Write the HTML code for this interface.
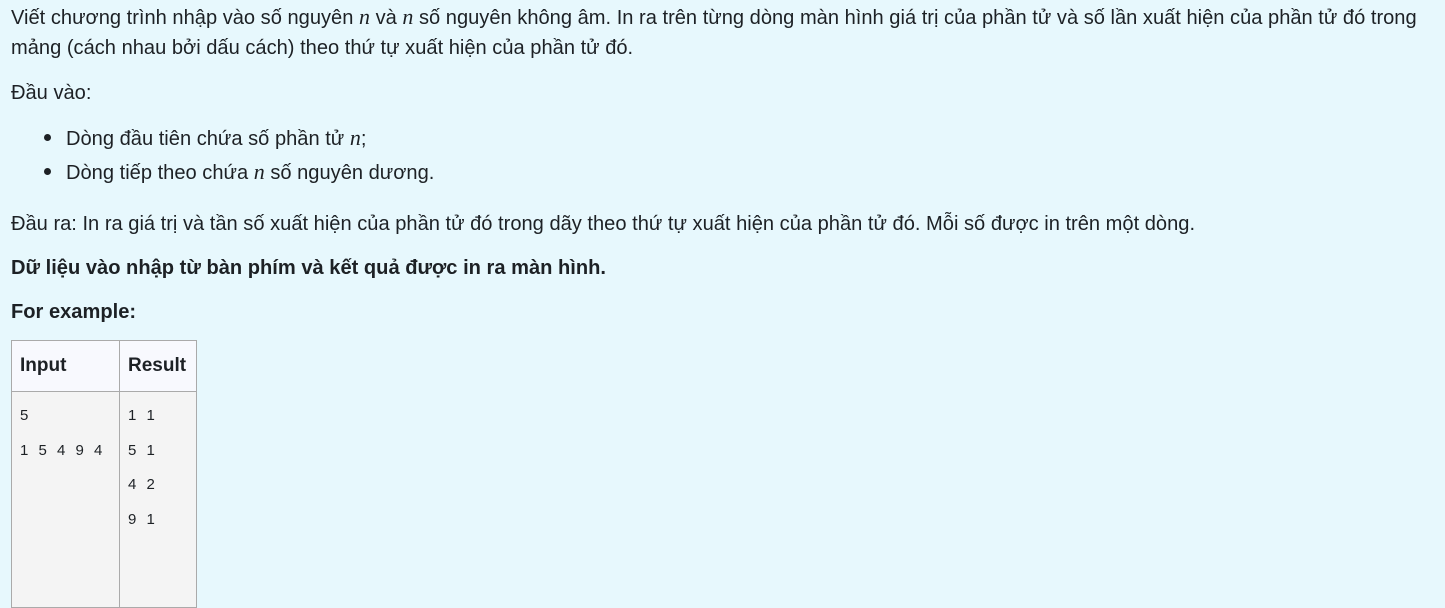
<!DOCTYPE html>
<html><head><meta charset="utf-8"><style>
html,body{margin:0;padding:0;background:#e7f8fd;width:1445px;height:539px;overflow:hidden}
body{font-family:"Liberation Sans",sans-serif;font-size:20.1px;color:#1d2125}
.p{position:absolute;left:11px;white-space:nowrap}
i.m{font-family:"Liberation Serif",serif;font-size:22px;font-style:italic}
.b{position:absolute;left:44px;width:7px;height:7px;border-radius:50%;background:#1d2125}
table{position:absolute;left:11px;top:340px;border-collapse:collapse}
td,th{border:1px solid #aaa;vertical-align:top;text-align:left;padding:0 8px}
th{background:#f8f9fe;height:50px;font-weight:bold;font-size:19px;vertical-align:middle}
td{background:#f4f4f4;font-family:"Liberation Sans",sans-serif;font-size:15px;padding-top:15px;height:200px}
td div{height:34.5px;word-spacing:6px}
</style></head><body>
<div class="p" style="top:4px">Viết chương trình nhập vào số nguyên <i class="m">n</i> và <i class="m">n</i> số nguyên không âm. In ra trên từng dòng màn hình giá trị của phần tử và số lần xuất hiện của phần tử đó trong</div>
<div class="p" style="top:37px">mảng (cách nhau bởi dấu cách) theo thứ tự xuất hiện của phần tử đó.</div>
<div class="p" style="top:82px">Đầu vào:</div>
<div class="b" style="top:134px"></div>
<div class="p" style="left:66px;top:125px">Dòng đầu tiên chứa số phần tử <i class="m">n</i>;</div>
<div class="b" style="top:168px"></div>
<div class="p" style="left:66px;top:159px">Dòng tiếp theo chứa <i class="m">n</i> số nguyên dương.</div>
<div class="p" style="top:213px">Đầu ra: In ra giá trị và tần số xuất hiện của phần tử đó trong dãy theo thứ tự xuất hiện của phần tử đó. Mỗi số được in trên một dòng.</div>
<div class="p" style="top:257px;font-weight:bold">Dữ liệu vào nhập từ bàn phím và kết quả được in ra màn hình.</div>
<div class="p" style="top:301px;font-weight:bold">For example:</div>
<table><tr><th style="width:91px">Input</th><th style="width:60px">Result</th></tr>
<tr><td><div>5</div><div>1 5 4 9 4</div></td><td><div>1 1</div><div>5 1</div><div>4 2</div><div>9 1</div></td></tr></table>
</body></html>
